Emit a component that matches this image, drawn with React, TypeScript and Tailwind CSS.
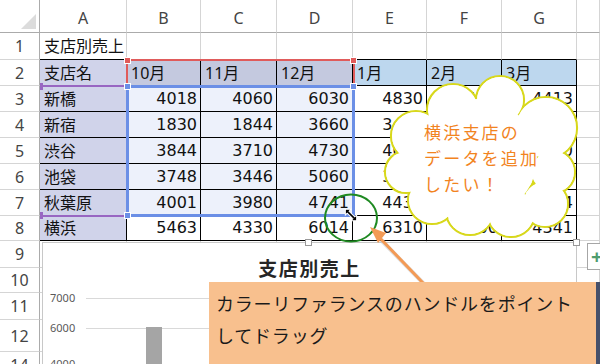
import React from "react";

type Cell = string | number;

// column letters A..G plus the partial H column
const colLetters = ["A", "B", "C", "D", "E", "F", "G", ""];

const rows: { n: number; cells: Cell[] }[] = [
  { n: 1, cells: ["支店別売上"] },
  { n: 2, cells: ["支店名", "10月", "11月", "12月", "1月", "2月", "3月"] },
  { n: 3, cells: ["新橋", 4018, 4060, 6030, 4830, 4150, 4413] },
  { n: 4, cells: ["新宿", 1830, 1844, 3660, 3460, 3810, 3950] },
  { n: 5, cells: ["渋谷", 3844, 3710, 4730, 4050, 4020, 4120] },
  { n: 6, cells: ["池袋", 3748, 3446, 5060, 3380, 3560, 3820] },
  { n: 7, cells: ["秋葉原", 4001, 3980, 4741, 4430, 4210, 4264] },
  { n: 8, cells: ["横浜", 5463, 4330, 6014, 6310, 5800, 4341] },
  { n: 9, cells: [] },
  { n: 10, cells: [] },
  { n: 11, cells: [] },
  { n: 12, cells: [] },
  { n: 14, cells: [] },
];

const cellBg = (r: number, c: number) => {
  if (r >= 2 && r <= 8 && c === 0) return "bg-[#d0d3ea]";
  if (r === 2 && c >= 1 && c <= 3) return "bg-[#c4c9df]";
  if (r === 2 && c >= 4 && c <= 6) return "bg-[#bdd7ee]";
  if (r >= 3 && r <= 7 && c >= 1 && c <= 3) return "bg-[#edf1fb]";
  return "bg-white";
};

const cellBorder = (r: number, c: number) => {
  const inTable = c <= 6;
  const right = r >= 2 && r <= 8 && inTable ? "border-r-black" : "border-r-[#d4d4d4]";
  const bottom = r >= 1 && r <= 8 && inTable ? "border-b-black" : "border-b-[#d4d4d4]";
  return `${right} ${bottom}`;
};

// cloud made of overlapping circles (page coordinates)
const bumps: [number, number, number][] = [
  [478, 158, 60],
  [453, 110, 26],
  [500, 100, 24],
  [546, 128, 31],
  [553, 172, 22],
  [545, 204, 23],
  [511, 213, 24],
  [470, 211, 24],
  [432, 200, 24],
  [406, 172, 21],
  [416, 136, 25],
];

function Cloud() {
  return (
    <div className="absolute left-[380px] top-[70px] w-[200px] h-[170px]">
      <svg width="200" height="170" viewBox="380 70 200 170" className="absolute inset-0">
        {bumps.map(([x, y, r], i) => (
          <circle key={"s" + i} cx={x} cy={y} r={r} fill="white" stroke="#d8d81c" strokeWidth="2.2" />
        ))}
        {bumps.map(([x, y, r], i) => (
          <circle key={"f" + i} cx={x} cy={y} r={r - 1.1} fill="white" />
        ))}
      </svg>
      <div className="relative pl-[44px] pt-[50px] text-[17px] leading-[26px] tracking-[2.2px] text-[#f2841f]">
        <div>横浜支店の</div>
        <div>データを追加</div>
        <div>したい！</div>
      </div>
    </div>
  );
}

function Chart() {
  return (
    <div className="absolute left-[42px] top-[242px] w-[535px] h-[140px] border border-[#c8c8c8] bg-white">
      <div className="mt-[13px] text-center text-[19px] leading-[26px] tracking-[1.5px] font-semibold text-[#262626]">
        支店別売上
      </div>
      <svg width="533" height="100" className="block">
        <g fontSize="11" fill="#595959" fontFamily="Noto Sans, sans-serif">
          <text x="7" y="20">7000</text>
          <text x="7" y="50">6000</text>
          <text x="7" y="86">4000</text>
        </g>
        <line x1="43" x2="533" y1="16.5" y2="16.5" stroke="#d9d9d9" />
        <line x1="43" x2="533" y1="46.5" y2="46.5" stroke="#d9d9d9" />
        <line x1="43" x2="533" y1="82.5" y2="82.5" stroke="#d9d9d9" />
        <rect x="103" y="45" width="16" height="60" fill="#a5a5a5" />
        <rect x="82" y="82" width="15" height="20" fill="#ed7d31" />
      </svg>
      {/* sizing handles */}
      <div className="absolute left-[262px] top-[-4px] w-[7px] h-[7px] bg-white border border-[#9a9a9a]" />
      <div className="absolute right-[-4px] top-[-4px] w-[7px] h-[7px] bg-white border border-[#9a9a9a]" />
    </div>
  );
}

const sq = "absolute w-[7px] h-[7px] border border-white";

// the three colour-reference frames Excel draws over the data
function References() {
  return (
    <>
      <div className="absolute left-[126px] top-[59px] w-[229px] h-[28px] border-x-2 border-t-2 border-[#e05b5b]">
        <div className={`${sq} left-[-4px] top-[-4px] bg-[#e05b5b]`} />
        <div className={`${sq} right-[-4px] top-[-4px] bg-[#e05b5b]`} />
      </div>
      <div className="absolute left-[40px] top-[85px] w-[87px] h-[132px] border-y-2 border-[#9866c2]">
        <div className="absolute left-0 top-[-4px] w-[3px] h-[7px] bg-[#9866c2]" />
        <div className="absolute left-0 bottom-[-4px] w-[3px] h-[7px] bg-[#9866c2]" />
      </div>
      <div className="absolute left-[126px] top-[85px] w-[229px] h-[132px] border-3 border-[#6b8fe6]">
        <div className={`${sq} left-[-5px] top-[-5px] bg-[#6b8fe6]`} />
        <div className={`${sq} right-[-5px] top-[-5px] bg-[#6b8fe6]`} />
        <div className={`${sq} left-[-5px] bottom-[-5px] bg-[#6b8fe6]`} />
      </div>
    </>
  );
}

export default function App() {
  return (
    <div className="relative w-[600px] h-[364px] overflow-hidden bg-white font-['Noto_Sans','Noto_Sans_CJK_JP',sans-serif] text-black">
      <div className="grid grid-cols-[40px_87px_74px_76px_76px_74px_75px_75px_23px] grid-rows-[33px_27px_26px_26px_26px_26px_26px_26px_25px_27px_25px_27px_32px_26px]">
        {/* corner */}
        <div className="flex items-end justify-end p-[3px] border-r border-b border-r-[#ababab] border-b-[#ababab] bg-white">
          <div className="w-[15px] h-[15px] bg-[#dcdcdc] [clip-path:polygon(100%_0,100%_100%,0_100%)]" />
        </div>
        {colLetters.map((l, i) => (
          <div
            key={"h" + i}
            className="flex items-center justify-center pt-[3px] border-r border-b border-r-[#d5d5d5] border-b-[#ababab] text-[16px] text-[#444]"
          >
            {l}
          </div>
        ))}

        {rows.map((row) => (
          <React.Fragment key={row.n}>
            <div className="flex items-center justify-center border-r border-b border-r-[#ababab] border-b-[#d5d5d5] text-[16px] text-[#444]">
              {row.n}
            </div>
            {colLetters.map((_, c) => {
              const v = row.cells[c];
              const isNum = typeof v === "number";
              return (
                <div
                  key={c}
                  className={`flex items-center border-r border-b whitespace-nowrap text-[16px] ${cellBg(row.n, c)} ${cellBorder(row.n, c)} ${
                    isNum
                      ? "justify-end pr-[3px] font-['DejaVu_Sans','Noto_Sans_CJK_JP',sans-serif] text-[#111]"
                      : "pl-[4px] text-[#111]"
                  }`}
                >
                  {v ?? ""}
                </div>
              );
            })}
          </React.Fragment>
        ))}
      </div>

      <References />

      <Chart />

      {/* chart elements button and the one below it */}
      <div className="absolute left-[587px] top-[243px] w-[24px] h-[27px] border border-[#a6a6a6] bg-white flex items-center pl-[3px]">
        <span className="text-[20px] leading-none font-bold text-[#4f9c6e]">+</span>
      </div>
      <div className="absolute left-[590px] top-[282px] w-[20px] h-[82px] bg-[#46506a]" />

      {/* green circle, arrow, resize cursor */}
      <svg className="absolute left-0 top-0" width="600" height="364">
        <ellipse cx="351" cy="218" rx="26" ry="23.5" fill="none" stroke="#1f8a22" strokeWidth="2" />
        <line x1="381" y1="240" x2="427" y2="287" stroke="#c8c8c8" strokeWidth="4" opacity="0.6" />
        <line x1="378" y1="236" x2="424" y2="284" stroke="#f39a55" strokeWidth="3" />
        <polygon points="370,227 386,233 378,243" fill="#f39a55" />
        <g transform="translate(351 215) rotate(-45)">
          <path
            d="M0,-8 L4,-4 L1.3,-4 L1.3,4 L4,4 L0,8 L-4,4 L-1.3,4 L-1.3,-4 L-4,-4 Z"
            fill="black"
            stroke="white"
            strokeWidth="1"
          />
        </g>
      </svg>

      <Cloud />

      {/* tip box */}
      <div className="absolute left-[209px] top-[282px] w-[387px] h-[90px] bg-[#f8c08e] pl-[7px] pt-[6px] text-[18px] leading-[32px] tracking-[0.8px] text-[#1a1a1a]">
        <div>カラーリファランスのハンドルをポイント</div>
        <div>してドラッグ</div>
      </div>
    </div>
  );
}
